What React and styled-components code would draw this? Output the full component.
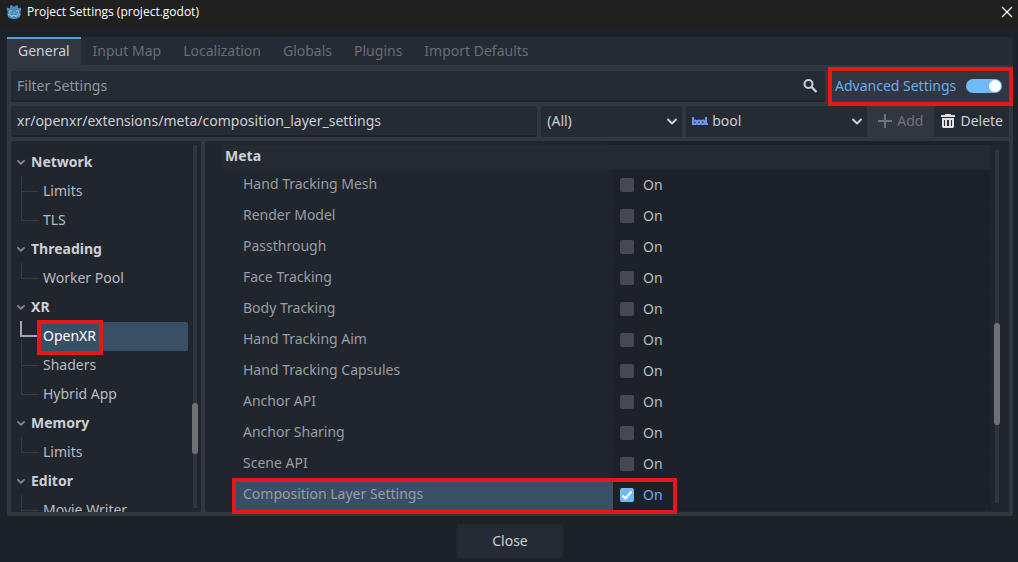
import React from "react";
import styled, { createGlobalStyle, css } from "styled-components";

const Global = createGlobalStyle`
  *, *::before, *::after { box-sizing: border-box; }
  html, body, #root { height: 100%; margin: 0; }
  body { background: #1d2229; overflow: hidden; }
  body, button, input, select {
    font-family: "Noto Sans", "Open Sans", sans-serif;
    font-size: 14px;
    line-height: 20px;
    color: #cdcfd2;
  }
`;

const Window = styled.div`
  display: flex;
  flex-direction: column;
  height: 100vh;
`;

const TitleBar = styled.header`
  display: flex;
  align-items: center;
  flex: none;
  height: 28px;
  padding: 0 5px 4px 6px;
  background: #202020;
`;

const Title = styled.h1`
  flex: 1;
  margin: 0 0 0 5px;
  font-family: "Open Sans", "Noto Sans", sans-serif;
  font-size: 12px;
  line-height: 16px;
  font-weight: 400;
  color: #fff;
`;

const IconButton = styled.button`
  display: flex;
  padding: 0;
  border: 0;
  background: none;
`;

const Dialog = styled.main`
  display: flex;
  flex-direction: column;
  flex: 1;
  min-height: 0;
  padding: 9px 5px 4px 7px;
`;

const TabBar = styled.nav`
  display: flex;
  flex: none;
  height: 28px;
  background: #252b34;
  border-radius: 2px 2px 0 0;
`;

const Tab = styled.button`
  padding: 0 11px 2px;
  border: 0;
  border-top: 2px solid ${(p) => (p.$active ? "#569eda" : "transparent")};
  margin-right: ${(p) => (p.$active ? "1px" : "0")};
  background: ${(p) => (p.$active ? "#313641" : "none")};
  color: ${(p) => (p.$active ? "#cdcfd2" : "#696d74")};
`;

const Panel = styled.section`
  display: flex;
  flex-direction: column;
  gap: 4px;
  flex: 1;
  min-height: 0;
  padding: 6px 4px 4px;
  background: #313641;
  border-radius: 0 0 2px 2px;
`;

const Bar = styled.div`
  display: flex;
  gap: 4px;
  flex: none;
  height: 31px;
`;

const field = css`
  height: 31px;
  border: 0;
  border-radius: 2px;
  background: #252b34;
`;

const TextField = styled.label`
  ${field}
  display: flex;
  align-items: center;
  flex: 1;
  min-width: 0;
  padding: 0 7px 0 6px;
  border-bottom: 2px solid #1d2229;
`;

const TextInput = styled.input`
  flex: 1;
  min-width: 0;
  padding: 0;
  border: 0;
  outline: 0;
  background: none;
  &::placeholder { color: #93969b; opacity: 1; }
`;

const SelectBox = styled.label`
  ${field}
  display: flex;
  align-items: center;
  gap: 4px;
  width: ${(p) => p.$width};
  padding: 0 2px 2px 6px;
`;

const Select = styled.select`
  flex: 1;
  min-width: 0;
  padding: 0;
  border: 0;
  appearance: none;
  background: none;
`;

const Button = styled.button`
  ${field}
  display: flex;
  align-items: center;
  justify-content: center;
  gap: 4px;
  padding: 0 6px 2px;
  ${(p) => p.$flat && css`
    padding-right: 7px;
    background: none;
    color: #6f737a;
  `}
  ${(p) => p.$wide && css`
    min-width: 106px;
    height: 34px;
    padding: 0;
  `}
`;

const Marked = styled.div`
  position: relative;
  &::after {
    content: "";
    position: absolute;
    inset: ${(p) => p.$spread};
    border: 4px solid #e61919;
    pointer-events: none;
  }
`;

const MarkedProperty = styled(Marked)`
  &::after {
    right: auto;
    width: 445px;
  }
`;

const MarkedLeaf = styled(Marked)`
  display: flex;
  flex: 1;
  &::after {
    right: auto;
    width: 66px;
  }
`;

const SwitchLabel = styled.label`
  display: flex;
  align-items: center;
  justify-content: space-between;
  width: 180px;
  height: 31px;
  padding: 0 7px 1px 6px;
  color: #69aeec;
`;

const Switch = styled.input`
  appearance: none;
  display: flex;
  width: 36px;
  height: 14px;
  margin: 0;
  padding: 1px;
  border-radius: 7px;
  background: #70bafa;
  &::after {
    content: "";
    width: 12px;
    height: 12px;
    margin-left: auto;
    border-radius: 6px;
    background: #fff;
  }
`;

const Columns = styled.div`
  display: flex;
  gap: 4px;
  flex: 1;
  min-height: 0;
`;

const TreePane = styled.aside`
  display: flex;
  justify-content: space-between;
  width: 190px;
  flex: none;
  padding: 4px 3px 0 4px;
  border-radius: 2px;
  background: #21262e;
  overflow: hidden;
`;

const Tree = styled.ul`
  display: flex;
  flex-direction: column;
  width: 173px;
  margin: 0;
  padding: 3px 0 0;
  list-style: none;
`;

const Group = styled.button`
  display: flex;
  align-items: center;
  gap: 4px;
  width: 100%;
  height: 29px;
  padding: 0 0 2px;
  border: 0;
  background: none;
  font-weight: 700;
`;

const Branch = styled.ul`
  margin: 0;
  padding: 0;
  list-style: none;
`;

const Leaf = styled.li`
  display: flex;
  align-items: center;
  height: 29px;
`;

const LeafLink = styled.a`
  flex: 1;
  height: 29px;
  padding-left: 6px;
  border-radius: 2px;
  line-height: 28px;
  color: ${(p) => (p.$selected ? "#fff" : "#b9bcc0")};
  background: ${(p) => (p.$selected ? "#394f66" : "none")};
  text-decoration: none;
`;

const Connector = styled.svg`
  flex: none;
  overflow: visible;
`;

const Scrollbar = styled.div`
  position: relative;
  flex: none;
  width: 6px;
  margin-bottom: ${(p) => p.$end};
  margin-top: ${(p) => p.$start};
  background: linear-gradient(90deg, transparent 1px, #2f343d 1px, #2f343d 5px, transparent 5px);
`;

const Thumb = styled.div`
  position: absolute;
  left: 0;
  width: 6px;
  border-radius: 3px;
  background: #6e7175;
  top: ${(p) => p.$top};
  height: ${(p) => p.$size};
`;

const Inspector = styled.section`
  display: flex;
  justify-content: space-between;
  flex: 1;
  min-width: 0;
  padding: 0 9px 0 18px;
  border-radius: 2px;
  background: #21262e;
`;

const Properties = styled.div`
  flex: 1;
  min-width: 0;
  margin-right: 3px;
`;

const PreviousRowEdge = styled.div`
  height: 4px;
  margin-left: 384px;
  background: #1d2229;
`;

const SectionTitle = styled.h2`
  height: 25px;
  margin: 0;
  padding-left: 2px;
  font-size: 14px;
  line-height: 22px;
  font-weight: 700;
  background: #252931;
`;

const Property = styled.label`
  display: flex;
  height: 31px;
`;

const PropertyName = styled.span`
  flex: 0 0 390px;
  padding-left: 20px;
  line-height: 28px;
  color: #9a9da2;
  ${(p) => p.$selected && css`
    flex-basis: 378px;
    margin-left: 12px;
    padding-left: 8px;
    background: #394f66;
  `}
`;

const PropertyValue = styled.span`
  display: flex;
  align-items: center;
  flex: 1;
  gap: 9px;
  padding: 0 0 1px 7px;
  border-radius: 2px;
  background: #1d2229;
  color: ${(p) => (p.$on ? "#69aeec" : "#b9bcc0")};
`;

const Check = styled.input`
  appearance: none;
  width: 14px;
  height: 14px;
  margin: 0;
  border-radius: 2px;
  background: #464951;
  &:checked { background: #70bafa; }
`;

const CheckCell = styled.span`
  display: grid;
  > * { grid-area: 1 / 1; }
`;

const Footer = styled.footer`
  display: flex;
  justify-content: center;
  flex: none;
  padding-top: 8px;
`;

const Chevron = ({ color = "#cdcfd2", size = 16 }) => (
  <svg width={size} height={size} viewBox="0 0 16 16" fill="none" stroke={color} strokeWidth={size < 16 ? 2.6 : 2} strokeLinecap="round" strokeLinejoin="round">
    <path d="M4 6.500l4 4 4-4" />
  </svg>
);

const groups = [
  { name: "Network", leaves: ["Limits", "TLS"] },
  { name: "Threading", leaves: ["Worker Pool"] },
  { name: "XR", leaves: ["OpenXR", "Shaders", "Hybrid App"] },
  { name: "Memory", leaves: ["Limits"] },
  { name: "Editor", leaves: ["Movie Writer"], continues: true },
];

const properties = [
  "Hand Tracking Mesh", "Render Model", "Passthrough", "Face Tracking", "Body Tracking",
  "Hand Tracking Aim", "Hand Tracking Capsules", "Anchor API", "Anchor Sharing", "Scene API",
];

const tabs = ["General", "Input Map", "Localization", "Globals", "Plugins", "Import Defaults"];

function TreeLeaf({ name, last }) {
  const selected = name === "OpenXR";
  const link = <LeafLink href="#" $selected={selected}>{name}</LeafLink>;
  return (
    <Leaf>
      <Connector width="22" height="29" fill="none">
        {selected ? (
          <>
            <path d="M6 -1V14H22" stroke="#a3a6aa" strokeWidth="2" />
            <path d="M6.500 18V29" stroke="#373c44" />
          </>
        ) : (
          <path d={last ? "M6.500 -1V14.500H24" : "M6.500 -1V29M6.500 14.500H24"} stroke="#373c44" />
        )}
      </Connector>
      {selected ? <MarkedLeaf $spread="-2px auto -4px 0">{link}</MarkedLeaf> : link}
    </Leaf>
  );
}

function PropertyRow({ name, on }) {
  return (
    <Property>
      <PropertyName $selected={on}>{name}</PropertyName>
      <PropertyValue $on={on}>
        <CheckCell>
          <Check type="checkbox" defaultChecked={on} />
          {on && (
            <svg width="14" height="14" viewBox="0 0 14 14" fill="none" stroke="#fff" strokeWidth="2">
              <path d="M2.500 7.500l3 3 6-7" />
            </svg>
          )}
        </CheckCell>
        On
      </PropertyValue>
    </Property>
  );
}

export default function App() {
  return (
    <Window>
      <Global />
      <TitleBar>
        <svg width="16" height="16" viewBox="0 0 16 16">
          <path fill="#478cbf" d="M6 1l1 1.500h2L10 1l2 .8-.2 1.700 1 .8L14.500 3.500 15.500 5l-1 2v4.500C14 14 11 15 8 15s-6-1-6.500-3.500V7l-1-2 1-1.500 1.700.8 1-.8L4 1.800z" />
          <circle cx="4.700" cy="8" r="1.400" fill="#dce8f2" />
          <circle cx="11.300" cy="8" r="1.400" fill="#dce8f2" />
          <circle cx="4.900" cy="8.100" r=".9" fill="#414042" />
          <circle cx="11.100" cy="8.100" r=".9" fill="#414042" />
          <path d="M8 8v1.600M1.800 10.500l2.700.5.5 1.300h1.600v-.8h2.800v.8H11l.5-1.300 2.700-.5" stroke="#dce8f2" strokeWidth=".6" fill="none" />
        </svg>
        <Title>Project Settings (project.godot)</Title>
        <IconButton aria-label="Close window">
          <svg width="12" height="12" stroke="#fff" strokeWidth="1.200"><path d="M1 1l10 10M11 1L1 11" /></svg>
        </IconButton>
      </TitleBar>
      <Dialog>
        <TabBar>
          {tabs.map((t, i) => <Tab key={t} $active={i === 0}>{t}</Tab>)}
        </TabBar>
        <Panel>
          <Bar>
            <TextField>
              <TextInput placeholder="Filter Settings" aria-label="Filter Settings" />
              <svg width="16" height="16" viewBox="0 0 16 16" fill="none" stroke="#cdcfd2" strokeWidth="2">
                <circle cx="6.500" cy="6" r="4" />
                <path d="M9.500 9l5 5" strokeWidth="2.400" />
              </svg>
            </TextField>
            <Marked $spread="-4px -4px -4px -1px">
              <SwitchLabel>
                Advanced Settings
                <Switch type="checkbox" role="switch" defaultChecked />
              </SwitchLabel>
            </Marked>
          </Bar>
          <Bar>
            <TextField>
              <TextInput aria-label="Property path" defaultValue="xr/openxr/extensions/meta/composition_layer_settings" />
            </TextField>
            <SelectBox $width="141px">
              <Select aria-label="Feature"><option>(All)</option></Select>
              <Chevron />
            </SelectBox>
            <SelectBox $width="181px">
              <svg width="16" height="16" viewBox="0 0 16 16" fill="none" stroke="#6f92f2" strokeWidth="2">
                <path d="M1 4v8M14 4v7h2" />
                <circle cx="2.800" cy="9.200" r="1.800" />
                <circle cx="6.900" cy="9.200" r="1.800" />
                <circle cx="10.900" cy="9.200" r="1.800" />
              </svg>
              <Select aria-label="Type"><option>bool</option></Select>
              <Chevron />
            </SelectBox>
            <Button $flat disabled>
              <svg width="16" height="16" stroke="#6f737a" strokeWidth="2"><path d="M8 1v14M1 8h14" /></svg>
              Add
            </Button>
            <Button>
              <svg width="16" height="16" fill="#e0e0e0">
                <path d="M5 1h6v1h4v2H1V2h4z" />
                <path fillRule="evenodd" d="M2 5h12v9l-1 1H3l-1-1zM4 7v6h1V7zm3 0v6h2V7zm4 0v6h1V7z" />
              </svg>
              Delete
            </Button>
          </Bar>
          <Columns>
            <TreePane>
              <Tree>
                {groups.map(({ name, leaves, continues }) => (
                  <li key={name}>
                    <Group><Chevron color="#80848a" size={12} />{name}</Group>
                    <Branch>
                      {leaves.map((l, i) => (
                        <TreeLeaf key={l} name={l} last={!continues && i === leaves.length - 1} />
                      ))}
                    </Branch>
                  </li>
                ))}
              </Tree>
              <Scrollbar $start="0px" $end="4px"><Thumb $top="71%" $size="14%" /></Scrollbar>
            </TreePane>
            <Inspector>
              <Properties>
                <PreviousRowEdge />
                <SectionTitle>Meta</SectionTitle>
                {properties.map((p) => <PropertyRow key={p} name={p} />)}
                <MarkedProperty $spread="-2px auto -3px 9px">
                  <PropertyRow name="Composition Layer Settings" on />
                </MarkedProperty>
              </Properties>
              <Scrollbar $start="9px" $end="9px"><Thumb $top="49%" $size="29%" /></Scrollbar>
            </Inspector>
          </Columns>
        </Panel>
        <Footer><Button $wide>Close</Button></Footer>
      </Dialog>
    </Window>
  );
}
